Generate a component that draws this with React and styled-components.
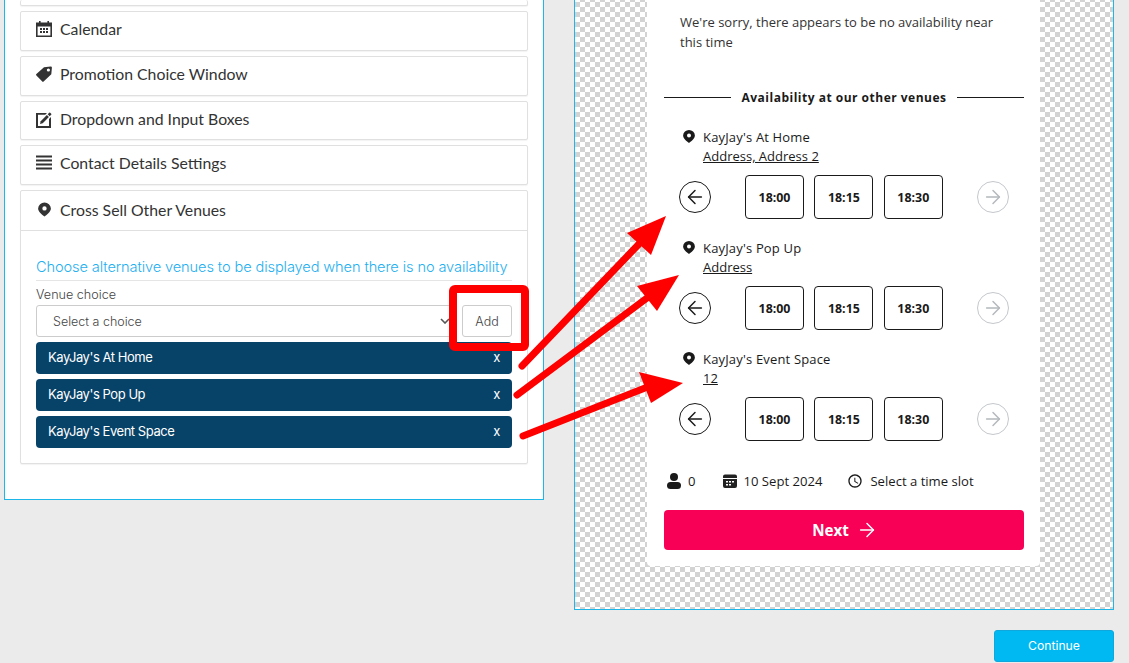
import styled, { createGlobalStyle } from 'styled-components';
import { MdAccessTime } from 'react-icons/md';
import { ArrowLeft, ArrowRight } from 'lucide-react';

const GlobalStyle = createGlobalStyle`
  html, body { margin: 0; height: 100%; overflow: hidden; background: #ebebeb; }
  * { box-sizing: border-box; }
`;

const Page = styled.div`
  position: relative;
  width: 1129px;
  height: 663px;
  overflow: hidden;
  padding-left: 4px;
  display: flex;
  align-items: flex-start;
`;

const LeftPanel = styled.div`
  width: 540px;
  height: 500px;
  background: #fff;
  border: 1px solid #1db6e8;
  border-top: 0;
  padding: 0 15px;
  display: flex;
  flex-direction: column;
  gap: 5px;
  margin-right: 30px;
`;

const Card = styled.div`
  height: ${(p) => p.$h}px;
  background: #fff;
  border: 1px solid #e0e0e0;
  border-top: ${(p) => (p.$cut ? 0 : 1)}px solid #e0e0e0;
  border-radius: 2px;
  box-shadow: 0 1px 1px rgba(0, 0, 0, 0.05);
  flex-shrink: 0;
`;

const CardHead = styled.div`
  height: ${(p) => p.$h || 38}px;
  display: flex;
  align-items: center;
  padding: 0 0 ${(p) => p.$pb ?? 5}px 15px;
  gap: 8px;
  font: 15.8px 'Lato', sans-serif;
  color: #333;
`;

const IconBox = styled.span`
  width: 16px;
  height: 17px;
  display: flex;
  align-items: center;
  justify-content: center;
  color: #333;
`;

const NavIcon = styled.span`
  display: flex;
  transform: translateY(${(p) => p.$dy || 0}px);
`;

const CrossBody = styled.div`
  border-top: 1px solid #e0e0e0;
  padding: 27px 15px 0;
`;

const Hint = styled.div`
  font: 300 14.6px 'Inter', sans-serif;
  letter-spacing: -0.11px;
  color: #1fb0f0;
  height: 23px;
  line-height: 19px;
  border-bottom: 1px solid #e5e5e5;
  white-space: nowrap;
`;

const FieldLabel = styled.div`
  font: 12.6px 'Inter', sans-serif;
  font-weight: 300;
  color: #444;
  margin-top: 6px;
  height: 16px;
`;

const SelectRow = styled.div`
  display: flex;
  align-items: center;
  gap: 6px;
  margin-top: 2px;
`;

const SelectBox = styled.div`
  width: 420px;
  height: 32px;
  border: 1px solid #ccc;
  border-radius: 3px;
  display: flex;
  align-items: center;
  justify-content: space-between;
  padding: 0 5px 0 16px;
  font: 12.5px 'Inter', sans-serif;
  font-weight: 300;
  color: #444;
`;

const AddButton = styled.div`
  width: 50px;
  height: 32px;
  border: 1px solid #ccc;
  border-radius: 3px;
  display: flex;
  align-items: center;
  justify-content: center;
  font: 12.5px 'Inter', sans-serif;
  font-weight: 300;
  color: #444;
`;

const ChipList = styled.div`
  display: flex;
  flex-direction: column;
  gap: 5px;
  margin-top: 5px;
`;

const Chip = styled.div`
  height: 32px;
  width: 476px;
  background: #074268;
  border-radius: 4px;
  display: flex;
  align-items: center;
  justify-content: space-between;
  padding: 0 12px 2px;
  font: 13px 'Inter', sans-serif;
  letter-spacing: -0.45px;
  color: #fff;
`;

const Preview = styled.div`
  width: 540px;
  height: 610px;
  border: 1px solid #1db6e8;
  border-top: 0;
  padding-left: 72px;
  background: repeating-conic-gradient(#d3d3d3 0 25%, #fff 0 50%) 5px 2px / 10px 10px;
`;

const Widget = styled.div`
  width: 393px;
  height: 566px;
  background: #fff;
  border-radius: 0 0 4px 4px;
  padding: 12px 16px 0 17px;
  font-family: 'Open Sans', sans-serif;
  color: #1a1a1a;
`;

const Sorry = styled.p`
  margin: 0 0 0 16px;
  font-size: 13px;
  line-height: 20px;
  width: 330px;
  color: #333;
`;

const Divider = styled.div`
  display: flex;
  align-items: center;
  gap: 10px;
  margin-top: 37px;
  margin-bottom: 22px;
  font-size: 12px;
  font-weight: 700;
  letter-spacing: 0.5px;
  white-space: nowrap;
  &::before, &::after {
    content: '';
    flex: 1;
    height: 1px;
    background: #1a1a1a;
  }
`;

const Venue = styled.div`
  height: 111px;
`;

const VenueHead = styled.div`
  display: flex;
  gap: 8px;
  padding-left: 19px;
`;

const VenueName = styled.div`
  font-size: 13px;
  line-height: 18px;
  letter-spacing: 0.17px;
`;

const VenueAddress = styled.a`
  display: block;
  font-size: 13px;
  line-height: 20px;
  color: #1a1a1a;
  text-decoration: underline;
`;

const PinWrap = styled.span`
  display: flex;
  height: 13px;
  margin-top: 2px;
`;

const SlotRow = styled.div`
  display: flex;
  align-items: center;
  margin-top: 9px;
  padding-left: 15px;
`;

const RoundArrow = styled.div`
  width: 32px;
  height: 32px;
  border-radius: 50%;
  border: 1px solid ${(p) => (p.$off ? '#c4c8cc' : '#1a1a1a')};
  color: ${(p) => (p.$off ? '#b4b8bc' : '#1a1a1a')};
  display: flex;
  align-items: center;
  justify-content: center;
  flex-shrink: 0;
`;

const Slots = styled.div`
  display: flex;
  gap: 10.4px;
  margin: 0 34px;
`;

const Slot = styled.div`
  width: 59px;
  height: 44px;
  border: 1px solid #1a1a1a;
  border-radius: 4px;
  display: flex;
  align-items: center;
  justify-content: center;
  font-size: 12.4px;
  font-weight: 700;
`;

const Summary = styled.div`
  display: flex;
  align-items: center;
  font-size: 13.1px;
  color: #1a1a1a;
  margin-top: 10px;
  height: 20px;
  padding-left: 3px;
`;

const SummaryItem = styled.div`
  display: flex;
  align-items: center;
  gap: 7px;
  margin-right: ${(p) => p.$gap}px;
`;

const NextButton = styled.div`
  height: 40px;
  margin-top: 19px;
  padding-left: 2px;
  background: #f70056;
  border-radius: 4px;
  color: #fff;
  font-size: 15.2px;
  font-weight: 700;
  display: flex;
  align-items: center;
  justify-content: center;
  gap: 7px;
`;

const ContinueButton = styled.div`
  position: absolute;
  left: 994px;
  top: 630px;
  width: 120px;
  height: 32px;
  background: #00b9f2;
  border: 1px solid #10a8dc;
  border-radius: 3px;
  color: #fff;
  font: 12.2px 'Inter', sans-serif;
  padding-bottom: 2px;
  display: flex;
  align-items: center;
  justify-content: center;
`;

const Overlay = styled.svg`
  position: absolute;
  left: 0;
  top: 0;
  pointer-events: none;
`;

const CalendarIcon = () => (
  <svg width="16" height="16" viewBox="0 0 16 16" fill="#333">
    <path fillRule="evenodd" d="M0 1.5h3V0h1.6v1.5h6.8V0H13v1.5h3V16H0V1.5zM1.6 5.5v8.9h12.8V5.5H1.6z" />
    <path d="M4 7h2v2H4zM7 7h2v2H7zM10 7h2v2h-2zM4 10h2v2H4zM7 10h2v2H7zM10 10h2v2h-2z" />
  </svg>
);

const TagIcon = () => (
  <svg width="16" height="16" viewBox="0 0 16 16" fill="#333">
    <path fillRule="evenodd" d="M8 1.2L14.6.4a1.2 1.2 0 0 1 1.3 1.3L15.3 8.2 7.6 15.6a.9.9 0 0 1-1.3 0L.4 9.4a.9.9 0 0 1 0-1.3L8 1.2zM12.4 2.4a1.6 1.6 0 1 0 0 3.2 1.6 1.6 0 0 0 0-3.2z" />
  </svg>
);

const EditIcon = () => (
  <svg width="16" height="16" viewBox="0 0 16 16" fill="#333">
    <path d="M0 1h11L9.2 2.8H2v11.2h11V7l2-2v11H0V1z" />
    <path d="M4 12l.7-2.7 6.2-6.2 2 2L6.7 11.3z" />
    <path d="M11.7 2.3l1.5-1.5a.7.7 0 0 1 1 0l1 1a.7.7 0 0 1 0 1l-1.5 1.5z" />
  </svg>
);

const ListIcon = () => (
  <svg width="16" height="15" viewBox="0 0 16 15" fill="#333">
    <path d="M0 .5h16v2H0zM0 4.5h16v2H0zM0 8.5h16v2H0zM0 12.5h16v2H0z" />
  </svg>
);

// teardrop pin with a round hole, same shape in the nav and the venue rows
const PinIcon = ({ w = 12, h = 13, color = '#1a1a1a' }) => (
  <svg width={w} height={h} viewBox="0 0 12 13" fill={color}>
    <path fillRule="evenodd" d="M6 0a5.9 5.9 0 0 1 5.9 5.6C11.9 8.4 8.3 11.5 6 13 3.7 11.500.1 8.400.1 5.600A5.900 5.900 0 0 1 6 0zm0 3.500a2 2 0 1 0 0 4 2 2 0 0 0 0-4z" />
  </svg>
);

const PersonIcon = () => (
  <svg width="14" height="16" viewBox="0 0 14 16" fill="#1a1a1a">
    <circle cx="7" cy="4" r="4" />
    <path d="M3.5 9h7a3.5 3.5 0 0 1 0 7h-7a3.5 3.5 0 0 1 0-7z" />
  </svg>
);

const SmallCalendar = () => (
  <svg width="14" height="14" viewBox="0 0 14 14" fill="#222">
    <path fillRule="evenodd" d="M2 .5h10a2 2 0 0 1 2 2V4H0V2.5a2 2 0 0 1 2-2zM0 5h14v7a2 2 0 0 1-2 2H2a2 2 0 0 1-2-2V5zm3 2v1.5h2V7H3zm3 0v1.5h2V7H6zm3 0v1.5h2V7H9zM3 10v1.5h2V10H3zm3 0v1.5h2V10H6z" />
  </svg>
);

const sections = [
  { label: 'Calendar', icon: <CalendarIcon />, h: 40, dy: 0 },
  { label: 'Promotion Choice Window', icon: <TagIcon />, h: 40, dy: 0 },
  { label: 'Dropdown and Input Boxes', icon: <EditIcon />, h: 39, dy: 1 },
  { label: 'Contact Details Settings', icon: <ListIcon />, h: 40, dy: 0 },
];

const venues = [
  { name: "KayJay's At Home", address: 'Address, Address 2' },
  { name: "KayJay's Pop Up", address: 'Address' },
  { name: "KayJay's Event Space", address: '12' },
];

const times = ['18:00', '18:15', '18:30'];

// red annotation arrows drawn over the screenshot
const arrows = [
  { line: '522,366 639,244', head: '666,216 627,233 651,255' },
  { line: '517,395 647,298', head: '679,275 637,286 657,311' },
  { line: '523,436 645,388', head: '683,383 639,372 651,403' },
];

const App = () => {
  return (
    <Page>
      <GlobalStyle />
      <LeftPanel>
        <Card $h={6} $cut />
        {sections.map((s) => (
          <Card key={s.label} $h={s.h}>
            <CardHead>
              <IconBox><NavIcon $dy={s.dy}>{s.icon}</NavIcon></IconBox>
              {s.label}
            </CardHead>
          </Card>
        ))}
        <Card $h={274}>
          <CardHead $h={39} $pb={2}>
            <IconBox><PinIcon w={13} h={15} color="#333" /></IconBox>
            Cross Sell Other Venues
          </CardHead>
          <CrossBody>
            <Hint>Choose alternative venues to be displayed when there is no availability</Hint>
            <FieldLabel>Venue choice</FieldLabel>
            <SelectRow>
              <SelectBox>
                Select a choice
                <svg width="10" height="6" viewBox="0 0 10 6" fill="none" stroke="#555" strokeWidth="1.6">
                  <path d="M1 1l4 4 4-4" />
                </svg>
              </SelectBox>
              <AddButton>Add</AddButton>
            </SelectRow>
            <ChipList>
              {venues.map((v) => (
                <Chip key={v.name}>
                  {v.name}
                  <span>x</span>
                </Chip>
              ))}
            </ChipList>
          </CrossBody>
        </Card>
      </LeftPanel>

      <Preview>
        <Widget>
          <Sorry>We're sorry, there appears to be no availability near this time</Sorry>
          <Divider>Availability at our other venues</Divider>
          {venues.map((v) => (
            <Venue key={v.name}>
              <VenueHead>
                <PinWrap><PinIcon /></PinWrap>
                <div>
                  <VenueName>{v.name}</VenueName>
                  <VenueAddress>{v.address}</VenueAddress>
                </div>
              </VenueHead>
              <SlotRow>
                <RoundArrow><ArrowLeft size={22} strokeWidth={1.6} /></RoundArrow>
                <Slots>
                  {times.map((t) => <Slot key={t}>{t}</Slot>)}
                </Slots>
                <RoundArrow $off><ArrowRight size={22} strokeWidth={1.6} /></RoundArrow>
              </SlotRow>
            </Venue>
          ))}
          <Summary>
            <SummaryItem $gap={27}><PersonIcon />0</SummaryItem>
            <SummaryItem $gap={25}><SmallCalendar />10 Sept 2024</SummaryItem>
            <SummaryItem $gap={0}><MdAccessTime size={16} />Select a time slot</SummaryItem>
          </Summary>
          <NextButton>Next <ArrowRight size={22} strokeWidth={1.6} /></NextButton>
        </Widget>
      </Preview>

      <ContinueButton>Continue</ContinueButton>

      <Overlay width="1129" height="663">
        <rect x="453" y="289" width="72" height="58" fill="none" stroke="#f00" strokeWidth="8" rx="2" />
        {arrows.map((a) => (
          <g key={a.head}>
            <polyline points={a.line} fill="none" stroke="#f00" strokeWidth="7" strokeLinecap="round" />
            <polygon points={a.head} fill="#f00" />
          </g>
        ))}
      </Overlay>
    </Page>
  );
};

export default App;
